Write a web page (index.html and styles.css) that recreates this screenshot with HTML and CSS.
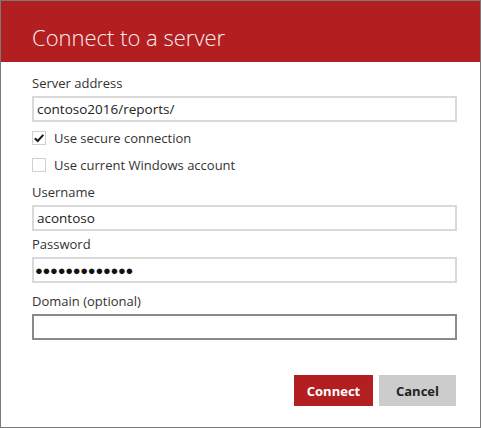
FILE: index.html
```html
<!DOCTYPE html>
<html>
<head>
<meta charset="utf-8">
<link rel="stylesheet" href="styles.css">
</head>
<body>
<div class="dialog">
  <div class="header"><h1 class="title">Connect to a server</h1></div>
  <div class="body">
    <label class="label">Server address</label>
    <div class="input">contoso2016/reports/</div>
    <div class="check first"><span class="box"><svg width="12" height="12" viewBox="0 0 12 12"><path d="M1.8 6.2 L4.7 9 L10.3 2.8" fill="none" stroke="#1a1a1a" stroke-width="2"/></svg></span><span>Use secure connection</span></div>
    <div class="check"><span class="box"></span><span>Use current Windows account</span></div>
    <label class="label gap1">Username</label>
    <div class="input">acontoso</div>
    <label class="label gap2">Password</label>
    <div class="input pw">●●●●●●●●●●●●●</div>
    <label class="label gap3">Domain (optional)</label>
    <div class="input focus"></div>
    <div class="actions">
      <button class="btn primary">Connect</button>
      <button class="btn secondary">Cancel</button>
    </div>
  </div>
</div>
</body>
</html>
```
FILE: styles.css
```css
html, body { margin: 0; padding: 0; background: #fff; }
body { font-family: "Open Sans", "Noto Sans", sans-serif; color: #333; }
.dialog {
  width: 479px; height: 426px;
  border: 1px solid #7a7a7a;
  background: #fff;
  display: flex; flex-direction: column;
}
.header {
  background: #b31f21;
  height: 61px;
  display: flex; align-items: center;
  padding-left: 31px;
}
.title {
  margin: 0; margin-top: 10px;
  font-weight: 300; font-size: 22px; color: #fbeeee;
}
.body { padding: 12px 24px 0 31px; display: flex; flex-direction: column; }
.label { font-size: 13px; line-height: 18px; color: #333; display: block; }
.input {
  box-sizing: border-box;
  margin-top: 4px;
  height: 26px; width: 425px;
  border: 2px solid #d9d9d9;
  font-size: 13.5px; line-height: 22px; padding-left: 3px; color: #222;
}
.input.pw { font-size: 13px; letter-spacing: -0.3px; color: #111; padding-left: 1px; }
.input.focus { border-color: #8a8a8a; }
.check { display: flex; align-items: center; font-size: 13px; height: 18px; }
.check.first { margin-top: 7px; }
.check + .check { margin-top: 9px; }
.box {
  width: 14px; height: 14px; border: 1px solid #d0d0d0; box-sizing: border-box;
  margin-right: 8px; display: flex; align-items: center; justify-content: center;
}
.box svg { flex: none; }
.gap1 { margin-top: 9px; }
.gap2 { margin-top: 4px; }
.gap3 { margin-top: 9px; }
.actions { display: flex; justify-content: flex-end; gap: 6px; margin-top: 35px; padding-right: 0; }
.btn {
  height: 31px; border: 0; font-family: inherit; font-weight: 700; font-size: 13px; padding: 0;
}
.primary { background: #b31f21; color: #fff; width: 79px; }
.secondary { background: #cccccc; color: #222; width: 77px; }
```
